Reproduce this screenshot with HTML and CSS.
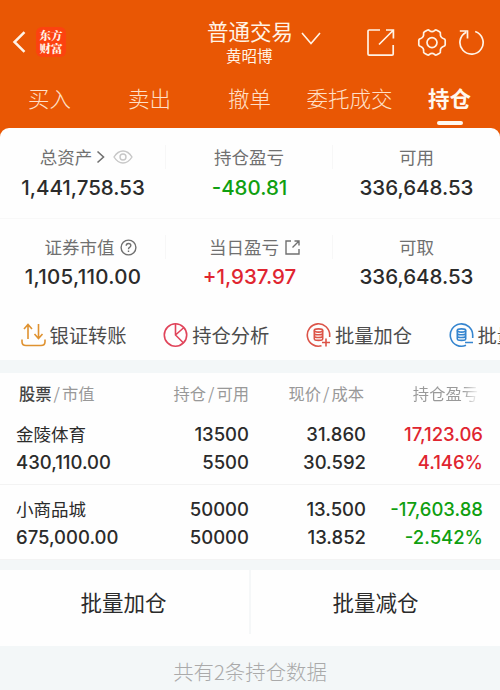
FILE: index.html
```html
<!DOCTYPE html>
<html lang="zh-CN">
<head>
<meta charset="utf-8">
<title>普通交易</title>
<link rel="stylesheet" href="styles.css">
</head>
<body>
<header class="top">
  <div class="bar">
    <svg class="back" width="16" height="24" viewBox="0 0 16 24"><path d="M12.500 2.200 2.500 12l10 9.800"/></svg>
    <div class="logo">东方<br>财富</div>
    <div class="account">
      <div class="title">普通交易<svg width="20" height="14" viewBox="0 0 20 14"><path d="m1 1 9 10.500 9-10.500"/></svg></div>
      <div class="user">黄昭博</div>
    </div>
    <div class="tools">
      <svg width="30" height="30" viewBox="0 0 30 30"><path d="M14 2H3.200Q2 2 2 3.200V26q0 1.200 1.200 1.200H26q1.200 0 1.200-1.200V17M13 16.500 27 2.500M20 2h7.400v8.500"/></svg>
      <svg class="gear" width="30" height="30" viewBox="0 0 30 30"><path d="M10.200 2.200q1.300-.7 2.200.4 2.600 2.100 5.200 0 .9-1.100 2.200-.4l2.700 1.500q1.200.8.900 2.100-.4 3.300 2.900 4.700 1.700.4 1.900 1.700v4.600q-.2 1.300-1.900 1.700-3.300 1.400-2.900 4.700.3 1.300-.9 2.100l-2.700 1.500q-1.300.7-2.200-.4-2.600-2.100-5.200 0-.9 1.100-2.200.4l-2.700-1.500q-1.200-.8-.9-2.100.4-3.300-2.900-4.700-1.700-.4-1.900-1.700v-4.600q.2-1.300 1.900-1.700 3.300-1.400 2.900-4.700-.3-1.300.9-2.100z"/><circle cx="15" cy="14.600" r="5"/></svg>
      <svg width="28" height="30" viewBox="0 0 28 30"><path d="M18.200 3.500A11.600 11.600 0 1 1 9.200 4.200M2.800 3h7.700v7.500"/></svg>
    </div>
  </div>
  <nav class="tabs"><span>买入</span><span>卖出</span><span>撤单</span><span>委托成交</span><span class="on">持仓</span></nav>
</header>
<main>
  <section class="summary">
    <div class="cell"><div class="label icon">总资产<svg class="chev" width="9" height="14" viewBox="0 0 9 14"><path d="m1.500 1.500 6 5.500-6 5.500"/></svg><svg class="eye" width="20" height="14" viewBox="0 0 20 14"><path d="M1 7q3.800-6 9-6t9 6q-3.800 6-9 6T1 7z"/><circle cx="10" cy="7" r="3"/></svg></div><div class="num">1,441,758.53</div></div>
    <div class="cell"><div class="label">持仓盈亏</div><div class="num green">-480.81</div></div>
    <div class="cell"><div class="label">可用</div><div class="num">336,648.53</div></div>
    <div class="cell"><div class="label icon more">证券市值<svg class="help" width="17" height="17" viewBox="0 0 17 17"><circle cx="8.500" cy="8.500" r="7.400"/><path d="M6.200 6.700q0-2.200 2.300-2.200t2.300 2q0 1.100-1.200 1.800T8.500 10.200M8.500 11.600v1.300"/></svg></div><div class="num spaced">1,105,110.00</div></div>
    <div class="cell"><div class="label icon today">当日盈亏<svg class="help" width="17" height="17" viewBox="0 0 17 17"><path d="M7 2H2v13h13v-5M8.500 8.500 15 2M10.500 2H15v4.500"/></svg></div><div class="num red">+1,937.97</div></div>
    <div class="cell"><div class="label">可取</div><div class="num">336,648.53</div></div>
  </section>
  <section class="actions">
    <div><svg class="gold" width="25" height="26" viewBox="0 0 25 26"><path d="M7 17V3M3 7l4-4.500L11 7M17.500 2v14M13.500 12l4 4.500 4-4.500M1 17.500v2.300Q1 23.500 5 23.500h15q4 0 4-3.700v-2.300"/></svg>银证转账</div>
    <div><svg class="rose" width="25" height="26" viewBox="0 0 25 26"><circle cx="12.500" cy="13" r="11.200"/><path d="M12.500 1.800V13l8 8M12.500 13l8.400-7.500"/></svg>持仓分析</div>
    <div><svg class="coral" width="25" height="26" viewBox="0 0 25 26"><path d="M15.500 23.800A11.200 11.200 0 1 1 23.700 13v2M16 20.500h8M20 16.500v8"/><ellipse cx="12.500" cy="8.500" rx="4.200" ry="1.600"/><path d="M8.300 8.500v8.200q0 1.700 4.200 1.700t4.200-1.700V8.500M8.300 11.300q0 1.500 4.200 1.500t4.200-1.500M8.300 14q0 1.500 4.200 1.500t4.200-1.500"/></svg>批量加仓</div>
    <div><svg class="blue" width="25" height="26" viewBox="0 0 25 26"><path d="M17 23.300A11.200 11.200 0 1 1 23.700 13v3M16 20.500h8"/><ellipse cx="12.500" cy="8.500" rx="4.200" ry="1.600"/><path d="M8.300 8.500v8.200q0 1.700 4.200 1.700t4.200-1.700V8.500M8.300 11.300q0 1.500 4.200 1.500t4.200-1.500M8.300 14q0 1.500 4.200 1.500t4.200-1.500"/></svg>批量减仓</div>
  </section>
  <section class="holdings">
    <div class="row head"><span><b>股票</b><i>/</i>市值</span><span>持仓<i>/</i>可用</span><span>现价<i>/</i>成本</span><span><span class="fade">持仓盈亏</span></span></div>
    <div class="row"><span class="name">金陵体育</span><span>13500</span><span>31.860</span><span class="red">17,123.06</span><span>430,110.00</span><span>5500</span><span>30.592</span><span class="red">4.146%</span></div>
    <div class="row"><span class="name">小商品城</span><span>50000</span><span>13.500</span><span class="green">-17,603.88</span><span>675,000.00</span><span>50000</span><span>13.852</span><span class="green">-2.542%</span></div>
  </section>
  <section class="batch"><div>批量加仓</div><div>批量减仓</div></section>
  <footer>共有2条持仓数据</footer>
</main>
</body>
</html>
```
FILE: styles.css
```css
* { box-sizing: border-box; }
body { margin: 0; width: 500px; height: 690px; overflow: hidden; background: #e95704; font-family: Inter, "Noto Sans CJK SC", sans-serif; color: #2b2b2b; }
svg { fill: none; stroke: currentColor; stroke-width: 1.6; flex: none; }
.top { height: 128px; color: #fff3e6; font-family: "Noto Sans CJK SC", sans-serif; }
.bar { height: 78px; padding: 0 14px 0 12px; display: grid; grid-template-columns: 24px 100px 1fr 120px; }
.back { margin-top: 30px; stroke-width: 2.5; }
.logo { width: 30px; height: 30px; margin-top: 27px; padding-top: 2px; border-radius: 6px; background: #fc4210; text-align: center; font: 900 11.500px/13px "Noto Serif CJK SC", "Noto Sans CJK SC", serif; }
.account { padding-left: 71px; }
.title { margin-top: 17px; height: 28px; font-size: 21.500px; line-height: 28px; display: flex; align-items: center; gap: 8px; white-space: nowrap; }
.title svg { margin-top: 15px; }
.user { padding-left: 19px; font-size: 15.500px; line-height: 20px; white-space: nowrap; }
.tools { display: flex; padding-top: 28px; width: 125px; }
.tools .gear { margin: 0 10px 0 21px; }
.tools svg { stroke-width: 1.7; }
.tabs { display: grid; grid-template-columns: repeat(5, 100px); text-align: center; font-size: 21.500px; line-height: 30px; font-weight: 300; padding-top: 5px; color: #ffe0c8; }
.tabs span { margin-left: -1px; }
.tabs .on { font-weight: 700; color: #fff8ef; }
.on::after { content: ""; display: block; width: 26px; height: 4px; border-radius: 2px; background: #fff8ef; margin: 8px auto 0; }
main { background: #fefefe; border-radius: 9px 9px 0 0; height: 562px; }
.summary { display: grid; grid-template-columns: 166px 167px 167px; grid-template-rows: 91px 90px; }
.cell { text-align: center; border-bottom: 1px solid #f8f8f8; padding-top: 17px; }
.cell:nth-child(n+4) { border: 0; padding-top: 16px; }
.label { height: 24px; display: flex; justify-content: center; align-items: center; font: 17.500px/24px "Noto Sans CJK SC", sans-serif; color: #707070; }
.icon { padding-left: 8px; }
.icon.more { padding-left: 16px; }
.icon.today { padding-left: 12px; }
.cell:not(:nth-child(3n)) .label { border-right: 1px solid #f7f7f7; }
.chev { margin: 0 8px 0 4px; }
.eye { color: #c7c7c7; }
.eye, .help { stroke-width: 1.4; }
.help { margin-left: 5px; }
.num { font-size: 20.500px; font-weight: 500; line-height: 26px; margin-top: 6px; }
.spaced { letter-spacing: .3px; }
.cell:nth-child(n+4) .num { margin-top: 5px; }
.green { color: #109f10; }
.red { color: #e02530; }
.actions { height: 51px; padding-left: 20.500px; display: flex; overflow: hidden; }
.actions div { flex: 0 0 142.700px; display: flex; align-items: center; gap: 4px; height: 51px; font: 19.300px/28px "Noto Sans CJK SC", sans-serif; color: #4c4c4c; white-space: nowrap; }
.gold { color: #df9230; }
.rose { color: #e0445a; }
.coral { color: #dc5448; }
.blue { color: #3585cf; }
.holdings { border-top: 13px solid #f3f7f8; }
.row { display: grid; grid-template-columns: 130px 103px 117px 117px; align-content: start; padding: 10px 17px 0 16px; height: 74px; text-align: right; font-size: 18.500px; font-weight: 500; line-height: 27.500px; border-bottom: 1px solid #f3f3f3; white-space: nowrap; }
.row:last-child { height: 75px; padding-top: 11px; }
.row > span:nth-child(4n+1) { text-align: left; }
.row > .name { font: 17.500px/26px "Noto Sans CJK SC", sans-serif; height: 27.500px; }
.row.head { height: 38px; border: 0; padding: 7px 21px 0 19px; grid-template-columns: 126px 104px 115px 114px; font: 16.300px/27px "Noto Sans CJK SC", sans-serif; color: #999; }
.head b { font-weight: 500; color: #444; }
.head i { font-style: normal; padding: 0 2px; }
.head .fade { background: linear-gradient(90deg, #999 76%, #eee 98%); background-clip: text; color: transparent; }
.batch { border-top: 10px solid #f3f7f8; height: 86px; display: grid; grid-template-columns: 251px 249px; text-align: center; font: 21.500px/64px "Noto Sans CJK SC", sans-serif; }
.batch div { height: 64px; }
.batch div:first-child { border-right: 2px solid #f5f7f8; padding-right: 2px; }
footer { height: 50px; background: #f3f7f8; text-align: center; color: #aaa; font: 300 20.400px/51px "Noto Sans CJK SC", sans-serif; }
```
